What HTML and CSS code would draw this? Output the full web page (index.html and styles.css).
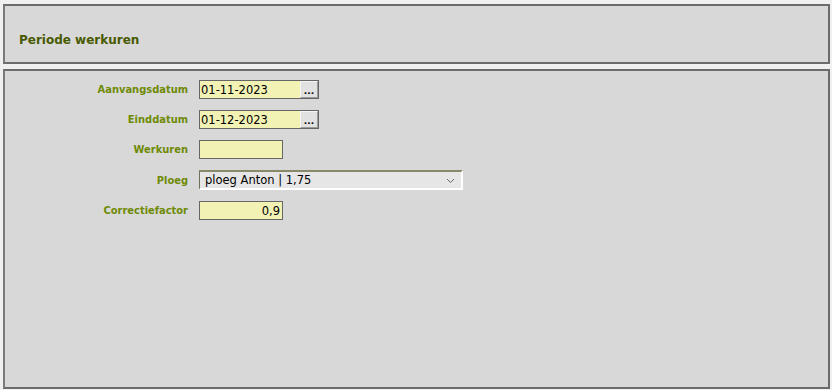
FILE: index.html
```html
<!DOCTYPE html>
<html lang="nl">
  <head>
    <meta charset="UTF-8" />
    <meta name="viewport" content="width=device-width, initial-scale=1.0" />
    <title>Periode werkuren</title>
    <link rel="stylesheet" href="styles.css">
  </head>
  <body>
    <div class="panel header-panel">
      <h1>Periode werkuren</h1>
    </div>

    <div class="panel form-panel">
      <div class="form-grid">
        <label class="field-label">Aanvangsdatum</label>
        <div class="date-field">
          <input type="text" class="text-input date-input" value="01-11-2023" />
          <span class="picker-button">...</span>
        </div>

        <label class="field-label">Einddatum</label>
        <div class="date-field">
          <input type="text" class="text-input date-input" value="01-12-2023" />
          <span class="picker-button">...</span>
        </div>

        <label class="field-label">Werkuren</label>
        <div><input type="text" class="text-input short-input" value="" /></div>

        <label class="field-label">Ploeg</label>
        <div class="select-box">
          <span class="select-value">ploeg Anton | 1,75</span>
          <svg class="select-arrow" width="9" height="6" viewBox="0 0 9 6">
            <path d="M1 1 L4.5 4.5 L8 1" fill="none" stroke="#666" stroke-width="1" />
          </svg>
        </div>

        <label class="field-label">Correctiefactor</label>
        <div><input type="text" class="text-input short-input align-right" value="0,9" /></div>
      </div>
    </div>
  </body>
</html>
```

FILE: styles.css
```css
body {
  margin: 0;
  padding: 4px 2px 0 3px;
  background-color: #f0f0f0;
  font-family: "DejaVu Sans", Verdana, sans-serif;
  font-size: 11px;
}
.panel {
  box-sizing: border-box;
  background: #d8d8d8;
  border: 2px solid #6c6c6c;
  border-left-color: #7a7a7a;
}
.header-panel {
  height: 60px;
  padding: 26px 0 0 14px;
}
.header-panel h1 {
  margin: 0;
  font-size: 12px;
  font-weight: bold;
  color: #485a00;
  line-height: 16px;
}
.form-panel {
  margin-top: 5px;
  height: 320px;
  padding-top: 9px;
}
.form-grid {
  display: grid;
  grid-template-columns: 183px 1fr;
  column-gap: 11px;
  row-gap: 11px;
  align-items: center;
}
.field-label {
  text-align: right;
  font-family: "DejaVu Sans Condensed", "DejaVu Sans", sans-serif;
  font-weight: bold;
  color: #6f8a05;
  line-height: 19px;
}
.text-input {
  box-sizing: border-box;
  height: 19px;
  margin: 0;
  padding: 0 2px;
  border: 1px solid #666;
  background: #f2f2b4;
  font-family: "DejaVu Sans", Verdana, sans-serif;
  font-size: 11.5px;
  color: #000;
  outline: none;
}
.date-field {
  display: flex;
  width: 120px;
  height: 19px;
  box-sizing: border-box;
  border: 1px solid #666;
  background: #f2f2b4;
}
.date-input {
  border: none;
  width: 100px;
  height: 17px;
  padding-left: 1px;
}
.picker-button {
  box-sizing: border-box;
  width: 18px;
  height: 17px;
  background: #e1e1e1;
  border: 1px solid #9a9a9a;
  border-top-color: #f5f5f5;
  border-left-color: #f5f5f5;
  font-size: 9px;
  font-weight: bold;
  line-height: 19px;
  text-align: center;
  color: #000;
  overflow: hidden;
}
.short-input {
  width: 84px;
}
.align-right {
  text-align: right;
}
.select-box {
  box-sizing: border-box;
  width: 264px;
  height: 20px;
  display: flex;
  align-items: center;
  justify-content: space-between;
  padding: 0 6px 0 5px;
  background: #e6e6e6;
  border: 2px solid #fff;
  border-top-color: #8a8a6a;
  border-left-color: #6f6f5a;
  border-left-width: 1px;
}
.select-value {
  color: #000;
  font-size: 11.5px;
}
.select-arrow {
  display: block;
  margin-top: 2px;
}
```
